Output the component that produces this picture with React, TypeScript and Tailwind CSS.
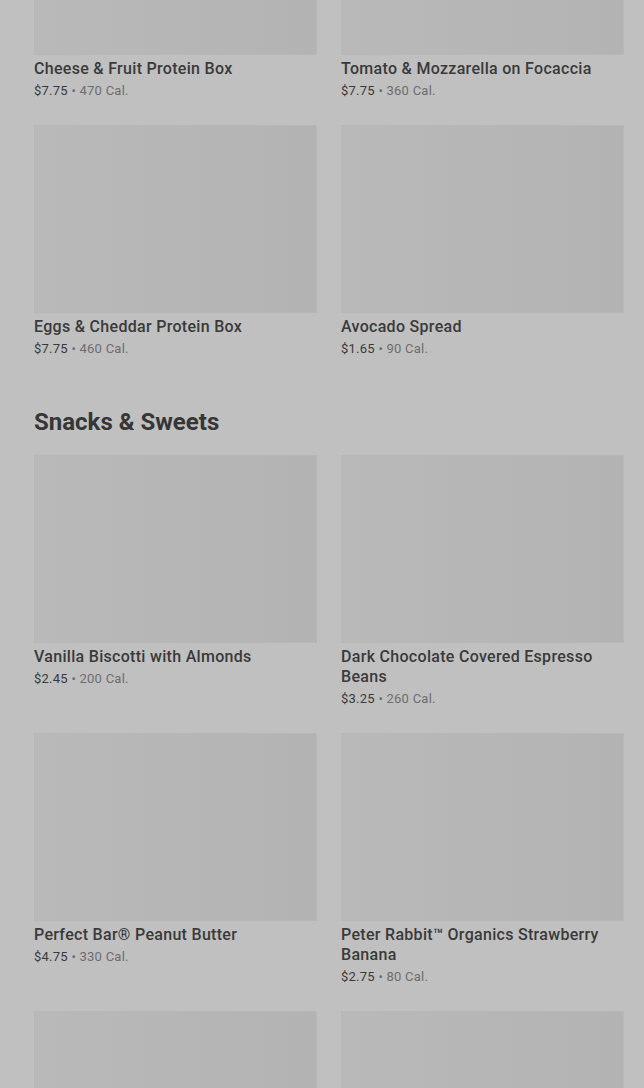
import React from "react";

type Item = { name: string; price: string; cal: string };

const top: Item[] = [
  { name: "Cheese & Fruit Protein Box", price: "$7.75", cal: "470 Cal." },
  { name: "Tomato & Mozzarella on Focaccia", price: "$7.75", cal: "360 Cal." },
  { name: "Eggs & Cheddar Protein Box", price: "$7.75", cal: "460 Cal." },
  { name: "Avocado Spread", price: "$1.65", cal: "90 Cal." },
];

const snacks: Item[] = [
  { name: "Vanilla Biscotti with Almonds", price: "$2.45", cal: "200 Cal." },
  { name: "Dark Chocolate Covered Espresso Beans", price: "$3.25", cal: "260 Cal." },
  { name: "Perfect Bar® Peanut Butter", price: "$4.75", cal: "330 Cal." },
  { name: "Peter Rabbit™ Organics Strawberry Banana", price: "$2.75", cal: "80 Cal." },
  { name: "Oatmeal Cookie", price: "$2.45", cal: "300 Cal." },
  { name: "Chocolate Chip Cookie", price: "$2.45", cal: "380 Cal." },
];

function Card({ item }: { item: Item }) {
  return (
    <div className="flex flex-col">
      <div className="h-[188px] w-full bg-gradient-to-r from-[#b9b9b9] to-[#b3b3b3] border border-[#b7b7b7]" />
      <div className="mt-[4px] text-[16px] leading-5 font-medium text-[#3a3a3a] tracking-[0.3px]">
        {item.name}
      </div>
      <div className="mt-[2px] text-[13px] leading-5 text-[#6d6d6d] tracking-[0.25px]">
        <span className="text-[#3a3a3a]">{item.price}</span>
        <span> • {item.cal}</span>
      </div>
    </div>
  );
}

export default function App() {
  return (
    <div
      className="h-[1088px] overflow-hidden bg-[#c0c0c0] pl-[34px] pr-[20px]"
      style={{ fontFamily: "Roboto, 'Noto Sans', sans-serif" }}
    >
      <div className="-mt-[133px] grid grid-cols-2 gap-x-6 gap-y-6">
        {top.map((it) => (
          <Card key={it.name} item={it} />
        ))}
      </div>
      <h2 className="mt-[49px] mb-[19px] text-[24px] leading-7 font-bold text-[#363636]">
        Snacks &amp; Sweets
      </h2>
      <div className="grid grid-cols-2 gap-x-6 gap-y-6">
        {snacks.map((it) => (
          <Card key={it.name} item={it} />
        ))}
      </div>
    </div>
  );
}
